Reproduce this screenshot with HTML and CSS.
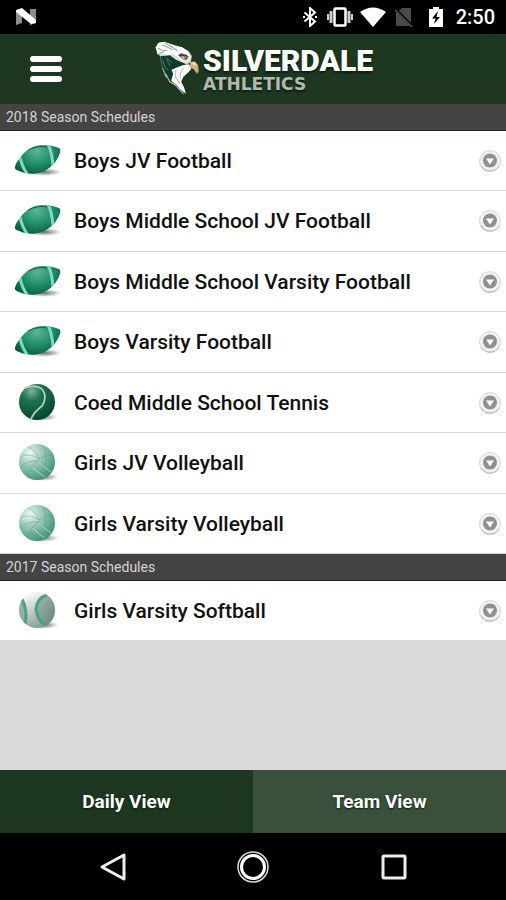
FILE: index.html
```html
<!DOCTYPE html>
<html lang="en">
<head>
<meta charset="utf-8">
<meta name="viewport" content="width=device-width, initial-scale=1">
<title>Silverdale Athletics</title>
<link rel="stylesheet" href="styles.css">
</head>
<body>
<svg class="sprite" aria-hidden="true">
  <defs>
    <radialGradient id="football-fill" cx="0.48" cy="0.25" r="0.65">
      <stop offset="0" stop-color="#5bb596"/><stop offset="0.45" stop-color="#26936f"/><stop offset="1" stop-color="#04553c"/>
    </radialGradient>
    <radialGradient id="tennis-fill" cx="0.35" cy="0.2" r="0.8">
      <stop offset="0" stop-color="#7ab59a"/><stop offset="0.35" stop-color="#20714f"/><stop offset="1" stop-color="#034a31"/>
    </radialGradient>
    <radialGradient id="volley-fill" cx="0.3" cy="0.25" r="0.8">
      <stop offset="0" stop-color="#eef7f3"/><stop offset="0.4" stop-color="#9fcebb"/><stop offset="1" stop-color="#3f9175"/>
    </radialGradient>
    <linearGradient id="softball-fill" x1="0.3" y1="0" x2="0.6" y2="1">
      <stop offset="0" stop-color="#ffffff"/><stop offset="0.45" stop-color="#c8d1cd"/><stop offset="1" stop-color="#7f9c91"/>
    </linearGradient>
    <linearGradient id="softball-panel" x1="0" y1="0" x2="1" y2="1">
      <stop offset="0" stop-color="#a5b9b1"/><stop offset="1" stop-color="#61857a"/>
    </linearGradient>
    <radialGradient id="shadow-fill">
      <stop offset="0" stop-color="#333" stop-opacity="0.75"/><stop offset="0.6" stop-color="#555" stop-opacity="0.35"/><stop offset="1" stop-color="#888" stop-opacity="0"/>
    </radialGradient>
    <clipPath id="football-clip"><path d="M1 26Q1 23 6 17C12 8 20 4 28 4Q38 4 45 7Q47 8 46 12C43 21 36 28 28 31C20 34 12 33 5 30Q0 28 1 26Z"/></clipPath>
    <clipPath id="softball-clip"><circle cx="23" cy="19" r="18"/></clipPath>
  </defs>
  <symbol id="football" viewBox="0 0 48 40">
    <ellipse cx="30" cy="31" rx="18" ry="4" fill="url(#shadow-fill)"/>
    <g clip-path="url(#football-clip)">
      <path d="M0 0h48v40H0z" fill="url(#football-fill)"/>
      <path d="M6 16Q8 26 14 34" fill="none" stroke="#7ddcbb" stroke-width="3"/>
      <path d="M34 3Q38 11 39 25" fill="none" stroke="#7ddcbb" stroke-width="3"/>
      <path d="M14 9Q24 4 33 6" fill="none" stroke="#0b6448" stroke-width="1"/>
    </g>
  </symbol>
  <symbol id="tennis" viewBox="0 0 48 40">
    <ellipse cx="27" cy="34" rx="17" ry="4" fill="url(#shadow-fill)"/>
    <circle cx="23" cy="19" r="18" fill="url(#tennis-fill)"/>
    <path d="M10 5Q22 1 28 6Q34 14 28 23Q20 29 17 36" fill="none" stroke="#b9d6c9" stroke-width="1.6"/>
  </symbol>
  <symbol id="volleyball" viewBox="0 0 48 40">
    <ellipse cx="28" cy="34" rx="17" ry="4" fill="url(#shadow-fill)"/>
    <circle cx="23" cy="19" r="18" fill="url(#volley-fill)"/>
    <g fill="none" stroke="#53967e" stroke-width="0.7" opacity="0.6">
      <path d="M7 14Q14 9 25 16Q34 11 39 12M6 24Q14 17 24 18M14 4Q22 7 25 16Q18 22 13 33M24 18Q32 25 38 27M20 23Q27 29 33 33M16 27Q22 33 25 36M31 22Q33 15 30 4"/>
    </g>
    <g fill="none" stroke="#e4f3ed" stroke-width="0.8" opacity="0.7">
      <path d="M8 15Q15 11 24 17M25 19Q32 26 37 29M19 24Q25 31 31 34"/>
    </g>
  </symbol>
  <symbol id="softball" viewBox="0 0 48 40">
    <ellipse cx="29" cy="34" rx="16" ry="4" fill="url(#shadow-fill)"/>
    <g clip-path="url(#softball-clip)">
      <path d="M4 0h38v38H4z" fill="url(#softball-fill)"/>
      <path d="M8 7Q15 20 11 34L3 32V7Z" fill="#8eb3a4"/>
      <path d="M33 4Q23 7 22 18Q23 29 32 34L42 32V4Z" fill="url(#softball-panel)"/>
      <path d="M8 8Q14 20 11 33M33 4Q23 7 22 18Q23 29 32 35" fill="none" stroke="#4ba183" stroke-width="3"/>
    </g>
  </symbol>
  <symbol id="disclosure" viewBox="0 0 24 24">
    <circle cx="12" cy="12" r="10.500" fill="#f2f2f2" stroke="#d8d8d8"/>
    <path d="M3 17A10.500 10.500 0 0 0 21 17" fill="none" stroke="#b5b5b5"/>
    <circle cx="12" cy="11.500" r="7" fill="#909090"/>
    <path d="M8 9.500h8l-4 6z" fill="#fff"/>
  </symbol>
</svg>

<div class="status-bar">
  <svg class="status-n" viewBox="0 0 22 18" aria-hidden="true">
    <path d="M1 3l6-2v14l-6 2zM15 1h6v14l-6 2z" fill="#8d8d8d"/>
    <path d="M1 2l6-2 14 12v3l-5 1L1 4z" fill="#fff"/>
  </svg>
  <div class="status-icons">
    <svg class="i-bt" viewBox="0 0 14 20" aria-hidden="true"><path d="M1.500 5.500L12 14.500L7 19V1L12 5.500L1.500 14.500" fill="none" stroke="#fff" stroke-width="2"/><path d="M0 10h2M12 10h2" stroke="#fff" stroke-width="2"/></svg>
    <svg class="i-vib" viewBox="0 0 26 20" aria-hidden="true"><rect x="7.500" y="1.500" width="11" height="17" rx="1" fill="none" stroke="#fff" stroke-width="2.500"/><path d="M4 4v12M22 4v12" stroke="#ccc" stroke-width="3"/><path d="M1 7v6M25 7v6" stroke="#ccc" stroke-width="2"/></svg>
    <svg class="i-wifi" viewBox="0 0 26 20" aria-hidden="true"><path d="M0 5Q13-4 26 5L13 20z" fill="#fff"/></svg>
    <svg class="i-sim" viewBox="0 0 20 20" aria-hidden="true"><path d="M8 1h9v18H2V6z" fill="#4a4a4a"/><path d="M0 1l19 19" stroke="#000" stroke-width="3"/><path d="M1 3l17 17" stroke="#555" stroke-width="1.500"/></svg>
    <svg class="i-batt" viewBox="0 0 14 20" aria-hidden="true"><path d="M4 0h6v2h4v18H0V2h4z" fill="#fff"/><path d="M9 4L3 11.500h3.500L5 17l6-7H7.500z" fill="#000"/></svg>
    <time class="clock">2:50</time>
  </div>
</div>

<header class="app-bar">
  <button class="menu-button" type="button" aria-label="Menu"><span></span><span></span><span></span></button>
  <div class="brand">
    <svg class="brand-mark" viewBox="24 18 138 168" aria-hidden="true">
      <path d="M30 40L40 27L56 23L78 30L106 38L126 50L136 64L133 82L113 94L88 101L82 120L76 126L54 105L44 66Z" fill="#d8dfda"/>
      <path d="M44 65L72 62L90 75L110 84L120 88L98 100L84 126L90 142L58 120L48 92Z" fill="#0b3d29"/>
      <path d="M32 39L39 26L54 24L77 31L90 39L108 39L124 51L133 66L121 82L105 77L92 66L81 57L66 62L52 58L36 60Z" fill="#fff"/>
      <path d="M38 42L52 49L64 47M49 32L66 39L80 46M40 57L55 53M57 27L76 37L94 49" fill="none" stroke="#8da297" stroke-width="3"/>
      <path d="M96 62L109 74L121 77L128 65L116 61L105 56" fill="#65776a"/>
      <circle cx="110" cy="69" r="5" fill="#d9b25c"/>
      <path d="M99 62L122 62" stroke="#173522" stroke-width="3"/>
      <path d="M131 82L145 80L154 91L156 108L151 116L141 102L128 98Z" fill="#cdb27c"/>
      <path d="M134 84L144 82L151 91L141 91Z" fill="#f0e1bc"/>
      <path d="M127 88L134 102L125 113L112 124L105 139L113 154L119 174L101 160L87 142L92 150L76 136L82 116L77 104L96 96L110 91Z" fill="#fff"/>
      <path d="M90 104L88 124L102 145M112 99L102 116L103 132M60 116L72 139L90 150L112 174M51 100L62 126" fill="none" stroke="#b4c3ba" stroke-width="3"/>
      <path d="M44 64L50 95L60 118M51 74L58 97L68 105M64 74L72 94M60 68L78 84" fill="none" stroke="#6b8a79" stroke-width="2"/>
    </svg>
    <div class="wordmark">
      <span class="wordmark-name">SILVERDALE</span>
      <span class="wordmark-sub">ATHLETICS</span>
    </div>
  </div>
</header>

<main class="schedules">
  <section>
    <h2 class="section-title">2018 Season Schedules</h2>
    <ul class="team-list">
      <li><a href="#"><svg class="sport"><use href="#football"/></svg><span>Boys JV Football</span><svg class="more"><use href="#disclosure"/></svg></a></li>
      <li><a href="#"><svg class="sport"><use href="#football"/></svg><span>Boys Middle School JV Football</span><svg class="more"><use href="#disclosure"/></svg></a></li>
      <li><a href="#"><svg class="sport"><use href="#football"/></svg><span>Boys Middle School Varsity Football</span><svg class="more"><use href="#disclosure"/></svg></a></li>
      <li><a href="#"><svg class="sport"><use href="#football"/></svg><span>Boys Varsity Football</span><svg class="more"><use href="#disclosure"/></svg></a></li>
      <li><a href="#"><svg class="sport"><use href="#tennis"/></svg><span>Coed Middle School Tennis</span><svg class="more"><use href="#disclosure"/></svg></a></li>
      <li><a href="#"><svg class="sport"><use href="#volleyball"/></svg><span>Girls JV Volleyball</span><svg class="more"><use href="#disclosure"/></svg></a></li>
      <li><a href="#"><svg class="sport"><use href="#volleyball"/></svg><span>Girls Varsity Volleyball</span><svg class="more"><use href="#disclosure"/></svg></a></li>
    </ul>
  </section>
  <section>
    <h2 class="section-title">2017 Season Schedules</h2>
    <ul class="team-list">
      <li><a href="#"><svg class="sport"><use href="#softball"/></svg><span>Girls Varsity Softball</span><svg class="more"><use href="#disclosure"/></svg></a></li>
    </ul>
  </section>
</main>

<div class="view-tabs">
  <button type="button">Daily View</button>
  <button type="button" class="active">Team View</button>
</div>

<nav class="system-nav" aria-label="System">
  <button type="button" aria-label="Back"><svg viewBox="0 0 32 32"><path d="M28 4v24L6 16z" fill="none" stroke="#eee" stroke-width="3" stroke-linejoin="round"/></svg></button>
  <button type="button" aria-label="Home"><svg viewBox="0 0 32 32"><circle cx="16" cy="16" r="15" fill="none" stroke="#ddd" stroke-width="1.500"/><circle cx="16" cy="16" r="11.500" fill="none" stroke="#fff" stroke-width="3"/></svg></button>
  <button type="button" aria-label="Recent apps"><svg viewBox="0 0 32 32"><rect x="5" y="5" width="22" height="22" rx="1" fill="none" stroke="#eee" stroke-width="3"/></svg></button>
</nav>
</body>
</html>
```
FILE: styles.css
```css
* {
  box-sizing: border-box;
}

body {
  margin: 0;
  min-height: 100vh;
  display: flex;
  flex-direction: column;
  background: #000;
  font-family: Roboto, "Liberation Sans", sans-serif;
}

button {
  border: 0;
  padding: 0;
  background: none;
  font: inherit;
  color: inherit;
}

svg {
  display: block;
  flex: none;
}

.sprite {
  position: absolute;
  width: 0;
  height: 0;
}

.status-bar {
  height: 34px;
  padding: 0 11px 0 15px;
  display: flex;
  align-items: center;
  justify-content: space-between;
  background: #000;
  color: #fff;
}

.status-n {
  width: 22px;
  height: 18px;
}

.status-icons {
  display: flex;
  align-items: center;
}

.status-icons svg {
  height: 20px;
}

.i-bt { width: 14px; margin-right: 10px; }
.i-vib { width: 26px; margin-right: 7px; }
.i-wifi { width: 26px; margin-right: 8px; }
.i-sim { width: 20px; margin-right: 15px; }
.i-batt { width: 14px; margin-right: 13px; }

.clock {
  font-size: 20px;
  font-weight: 500;
  line-height: 34px;
}

.app-bar {
  height: 70px;
  display: grid;
  grid-template-columns: 1fr auto 1fr;
  align-items: center;
  padding: 0 20px;
  background: #1e3720;
}

.menu-button {
  display: flex;
  flex-direction: column;
  gap: 4px;
  width: 52px;
  padding: 10px;
}

.menu-button span {
  height: 6px;
  border-radius: 3px;
  background: #fff;
}

.brand {
  display: flex;
  align-items: center;
  gap: 2px;
  padding-left: 20px;
}

.brand-mark {
  width: 48px;
  height: 58px;
}

.wordmark {
  display: flex;
  flex-direction: column;
  padding-top: 2px;
  text-shadow: 0 2px 2px #0a2010;
}

.wordmark-name {
  font-size: 30px;
  font-weight: 900;
  line-height: 28px;
  color: #fff;
}

.wordmark-sub {
  font-family: "DejaVu Sans", Roboto, sans-serif;
  font-size: 17px;
  font-weight: 700;
  line-height: 18px;
  color: #b4b8b2;
}

.schedules {
  flex: 1;
  background: #d9d9d9;
}

.section-title {
  margin: 0;
  padding: 0 6px;
  border-bottom: 1px solid #1a2a20;
  background: #444;
  color: #d4d4d4;
  font-size: 14px;
  font-weight: 400;
  line-height: 26px;
}

.team-list {
  margin: 0;
  padding: 0;
  list-style: none;
}

.team-list a {
  display: flex;
  align-items: center;
  height: 60px;
  padding: 0 4px 0 14px;
  border-bottom: 1px solid #d9d9d9;
  background: #fff;
  color: #111;
  font-size: 21px;
  font-weight: 500;
  text-decoration: none;
}

.team-list li:nth-child(even) a {
  height: 61px;
}

.team-list span {
  flex: 1;
  margin-left: 12px;
}

.sport {
  width: 48px;
  height: 40px;
}

.more {
  width: 24px;
  height: 24px;
}

.view-tabs {
  display: grid;
  grid-template-columns: 1fr 1fr;
  height: 63px;
  color: #fff;
  font-size: 19px;
  font-weight: 700;
}

.view-tabs button {
  background: #1e3720;
  text-shadow: 0 1px 2px #0a1a0c;
}

.view-tabs .active {
  background: #3a503c;
}

.system-nav {
  display: flex;
  justify-content: space-between;
  align-items: center;
  height: 67px;
  padding: 0 96px;
}

.system-nav svg {
  width: 32px;
  height: 32px;
}
```
